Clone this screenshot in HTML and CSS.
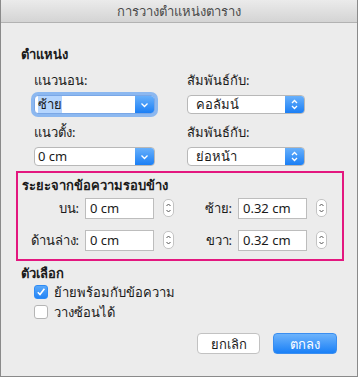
FILE: index.html
```html
<!DOCTYPE html>
<html lang="th">
<head>
  <meta charset="UTF-8">
  <title>การวางตำแหน่งตาราง</title>
  <link rel="stylesheet" href="styles.css">
</head>
<body>
<div class="window">
  <div class="titlebar">การวางตำแหน่งตาราง</div>

  <div class="content">
    <div class="heading">ตำแหน่ง</div>

    <div class="pos-grid">
      <div class="label">แนวนอน:</div>
      <div class="label">สัมพันธ์กับ:</div>

      <div class="combo focused">
        <span class="combo-text"><span class="sel">ซ้าย</span></span>
        <span class="combo-btn">
          <svg width="9" height="6" viewBox="0 0 9 6"><path d="M1.5 1.5 L4.5 4.5 L7.5 1.5" fill="none" stroke="#fff" stroke-width="1.3"/></svg>
        </span>
      </div>
      <div class="combo popup">
        <span class="combo-text">คอลัมน์</span>
        <span class="combo-btn">
          <svg width="9" height="13" viewBox="0 0 9 13"><path d="M2 5 L4.5 2.5 L7 5 M2 8 L4.5 10.5 L7 8" fill="none" stroke="#fff" stroke-width="1.3"/></svg>
        </span>
      </div>

      <div class="label">แนวตั้ง:</div>
      <div class="label">สัมพันธ์กับ:</div>

      <div class="combo">
        <span class="combo-text">0 cm</span>
        <span class="combo-btn">
          <svg width="9" height="6" viewBox="0 0 9 6"><path d="M1.5 1.5 L4.5 4.5 L7.5 1.5" fill="none" stroke="#fff" stroke-width="1.3"/></svg>
        </span>
      </div>
      <div class="combo popup">
        <span class="combo-text">ย่อหน้า</span>
        <span class="combo-btn">
          <svg width="9" height="13" viewBox="0 0 9 13"><path d="M2 5 L4.5 2.5 L7 5 M2 8 L4.5 10.5 L7 8" fill="none" stroke="#fff" stroke-width="1.3"/></svg>
        </span>
      </div>
    </div>

    <div class="distance-box">
      <div class="heading">ระยะจากข้อความรอบข้าง</div>
      <div class="dist-grid">
        <div class="dlabel">บน:</div>
        <div class="field">0 cm</div>
        <div class="stepper"><svg width="9" height="16" viewBox="0 0 9 16"><path d="M2.5 6 L4.5 4 L6.5 6 M2.5 10 L4.5 12 L6.5 10" fill="none" stroke="#555" stroke-width="1"/></svg></div>
        <div class="dlabel">ซ้าย:</div>
        <div class="field">0.32 cm</div>
        <div class="stepper"><svg width="9" height="16" viewBox="0 0 9 16"><path d="M2.5 6 L4.5 4 L6.5 6 M2.5 10 L4.5 12 L6.5 10" fill="none" stroke="#555" stroke-width="1"/></svg></div>

        <div class="dlabel">ด้านล่าง:</div>
        <div class="field">0 cm</div>
        <div class="stepper"><svg width="9" height="16" viewBox="0 0 9 16"><path d="M2.5 6 L4.5 4 L6.5 6 M2.5 10 L4.5 12 L6.5 10" fill="none" stroke="#555" stroke-width="1"/></svg></div>
        <div class="dlabel">ขวา:</div>
        <div class="field">0.32 cm</div>
        <div class="stepper"><svg width="9" height="16" viewBox="0 0 9 16"><path d="M2.5 6 L4.5 4 L6.5 6 M2.5 10 L4.5 12 L6.5 10" fill="none" stroke="#555" stroke-width="1"/></svg></div>
      </div>
    </div>

    <div class="heading options-heading">ตัวเลือก</div>
    <div class="check-row">
      <span class="checkbox checked"><svg width="10" height="10" viewBox="0 0 10 10"><path d="M1.8 5.2 L4 7.6 L8.4 1.8" fill="none" stroke="#fff" stroke-width="1.6"/></svg></span>
      <span>ย้ายพร้อมกับข้อความ</span>
    </div>
    <div class="check-row">
      <span class="checkbox"></span>
      <span>วางซ้อนได้</span>
    </div>

    <div class="actions">
      <button class="btn">ยกเลิก</button>
      <button class="btn primary">ตกลง</button>
    </div>
  </div>
</div>
</body>
</html>
```

FILE: styles.css
```css
body {
  margin: 0;
  background: #ececec;
  font-family: "Noto Sans", "Liberation Sans", sans-serif;
  font-size: 13px;
  color: #1a1a1a;
}

.window {
  width: 358px;
  height: 377px;
  box-sizing: border-box;
  border: 1px solid #8a8a8a;
  border-top: none;
  background: #ececec;
}

.titlebar {
  height: 22px;
  line-height: 22px;
  text-align: center;
  color: #4a4a4a;
  background: linear-gradient(#ebebeb, #d4d4d4);
  border-bottom: 1px solid #b2b2b2;
}

.content {
  padding: 22px 0 0 20px;
}

.heading {
  font-weight: bold;
  line-height: 18px;
}

/* position section */
.pos-grid {
  display: grid;
  grid-template-columns: 121px 118px;
  column-gap: 32px;
  margin: 7px 0 0 13px;
}

.label {
  line-height: 20px;
  margin-bottom: 5px;
}

.combo {
  display: flex;
  height: 19px;
  box-sizing: border-box;
  background: #fff;
  border: 1px solid #b8b8b8;
  border-radius: 4px;
  margin-bottom: 8px;
  overflow: hidden;
}

.pos-grid .combo:nth-last-child(-n+2) {
  margin-bottom: 0;
}

.combo.focused {
  box-shadow: 0 0 0 3px #8cb8f0;
  border-color: #7aa7e6;
}

.combo-text {
  flex: 1;
  line-height: 17px;
  padding-left: 3px;
}

.popup .combo-text {
  padding-left: 8px;
}

.sel {
  background: #b4d5fe;
}

.combo-btn {
  width: 19px;
  display: flex;
  align-items: center;
  justify-content: center;
  background: linear-gradient(#68b0fb, #1b7ff5);
}

/* distance box */
.distance-box {
  width: 328px;
  height: 90px;
  box-sizing: border-box;
  border: 2px solid #e3177f;
  margin: 5px 0 0 -5px;
  padding: 3px 0 0 4px;
}

.dist-grid {
  display: grid;
  grid-template-columns: 67px 69px 20px 64px 69px 20px;
  grid-auto-rows: 21px;
  row-gap: 11px;
  margin-top: 4px;
  margin-left: -4px;
}

.dlabel {
  text-align: right;
  padding-right: 6px;
  line-height: 21px;
}

.field {
  background: #fff;
  border: 1px solid #bdbdbd;
  box-sizing: border-box;
  line-height: 19px;
  padding-left: 4px;
}

.stepper {
  width: 11px;
  height: 18px;
  margin: 1px 0 0 9px;
  box-sizing: border-box;
  border: 1px solid #c4c4c4;
  border-radius: 5px;
  background: #fff;
  display: flex;
  align-items: center;
  justify-content: center;
}

/* options */
.options-heading {
  margin-top: 3px;
}

.check-row {
  display: flex;
  align-items: center;
  gap: 6px;
  margin-left: 13px;
  height: 20px;
}

.checkbox {
  width: 14px;
  height: 14px;
  box-sizing: border-box;
  border: 1px solid #b5b5b5;
  border-radius: 3px;
  background: #fff;
  display: flex;
  align-items: center;
  justify-content: center;
}

.checkbox.checked {
  border-color: #2f8cf5;
  background: linear-gradient(#5ba9fa, #2485f6);
}

.actions {
  display: flex;
  justify-content: flex-end;
  gap: 13px;
  margin: 11px 20px 0 0;
}

.btn {
  font-family: inherit;
  font-size: 13px;
  height: 21px;
  width: 63px;
  padding: 0;
  border: 1px solid #c2c2c2;
  border-radius: 4px;
  background: #fff;
  color: #1a1a1a;
}

.btn.primary {
  width: 64px;
  border-color: #3a8ef0;
  background: linear-gradient(#6db3fb, #1a80f7);
  color: #fff;
}
```
